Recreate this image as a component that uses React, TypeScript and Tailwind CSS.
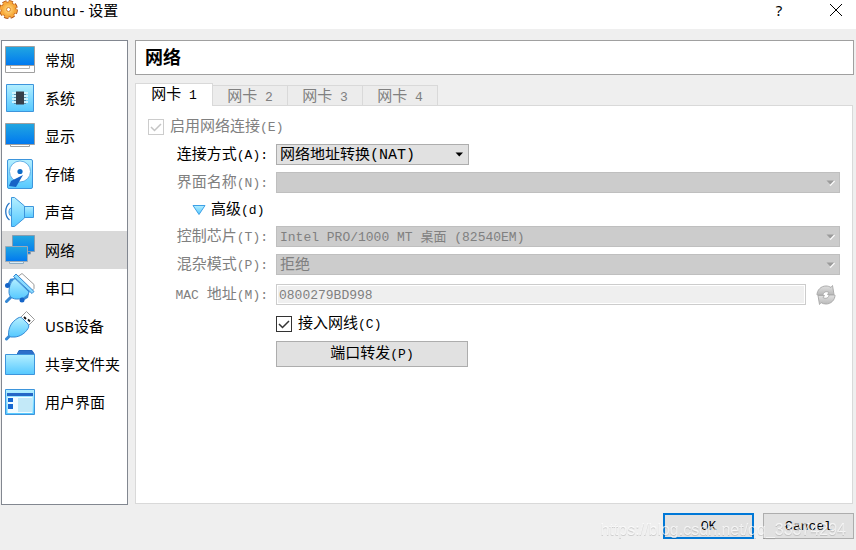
import React, { useState } from 'react';

const sections = ['常规', '系统', '显示', '存储', '声音', '网络', '串口', 'USB设备', '共享文件夹', '用户界面'];
const adapters = ['1', '2', '3', '4'];

const mono = "font-['Liberation_Mono','Noto_Sans_CJK_SC',monospace]";

function Gradients() {
    return (
        <svg className="absolute size-0" aria-hidden="true">
            <defs>
                <linearGradient id="screen" x1="0" y1="0" x2="0" y2="1">
                    <stop offset="0" stopColor="#22a7e0" />
                    <stop offset="1" stopColor="#0078f0" />
                </linearGradient>
                <linearGradient id="sky" x1="0" y1="0" x2="0" y2="1">
                    <stop offset="0" stopColor="#b4efff" />
                    <stop offset="1" stopColor="#55c8ff" />
                </linearGradient>
                <radialGradient id="gear">
                    <stop offset="0" stopColor="#ffe08a" />
                    <stop offset="1" stopColor="#f6a02c" />
                </radialGradient>
                <linearGradient id="silver" x1="0" y1="0" x2="0" y2="1">
                    <stop offset="0" stopColor="#e2e2e2" />
                    <stop offset="1" stopColor="#b8b8b8" />
                </linearGradient>
            </defs>
        </svg>
    );
}

function SectionIcon({ name }: { name: string }) {
    return (
        <svg viewBox="0 0 30 30" className="size-[30px] shrink-0" aria-hidden="true">
            {name === '常规' && (
                <>
                    <path d="M.5 20.5h29v7H.5z" fill="#fff" stroke="#a0a0a0" />
                    <path d="M.5 1.5h29v19H.5z" fill="url(#screen)" stroke="#a0a0a0" />
                    <path d="M5.5 21v2.500h19V21" fill="#fff" stroke="#b4b4b4" />
                </>
            )}
            {name === '系统' && (
                <>
                    <path d="M1.5 1.5h27v27h-27z" fill="url(#sky)" stroke="#3d95dc" />
                    <path d="M7 10h16M7 13h16M7 16h16M7 19h16" stroke="#e8faff" strokeWidth="1.6" />
                    <path d="M9 11.5h12M9 14.5h12M9 17.5h12M9 20.5h12" stroke="#5b8da8" />
                    <path d="M11 8.5h8v13h-8z" fill="#363e4a" />
                </>
            )}
            {name === '显示' && (
                <>
                    <path d="M5.5 23.5v2h19v-2" fill="#fff" stroke="#a0a0a0" />
                    <path d="M.5 2.5h29v21H.5z" fill="url(#screen)" stroke="#a0a0a0" />
                </>
            )}
            {name === '存储' && (
                <>
                    <rect x="2.5" y=".5" width="25" height="29" rx="1.5" fill="url(#sky)" stroke="#3d95dc" />
                    <circle cx="15" cy="12.5" r="10.5" fill="#fff" stroke="#4a9fe0" strokeWidth=".8" />
                    <circle cx="15" cy="12.5" r="2.6" fill="#0d6bc8" />
                    <path d="M18 16l-12 6-2 5 7 1z" fill="#1763c6" />
                </>
            )}
            {name === '声音' && (
                <>
                    <path d="M4.5 6C-.5 10-.5 19 4.5 23" fill="none" stroke="#2675c4" strokeWidth="1.3" />
                    <path d="M19.5 9.5h9v11h-9z" fill="url(#sky)" stroke="#3d95dc" />
                    <path d="M7 10.500C3 11 3 19 7 19.500z" fill="url(#sky)" stroke="#3d95dc" />
                    <path d="M6.500.500h3l10 8.500v12l-10 8.500h-3z" fill="url(#sky)" stroke="#3d95dc" />
                </>
            )}
            {name === '网络' && (
                <>
                    <path d="M7.5.5h22v16h-22zM11.5 17v2h14v-2" fill="url(#screen)" stroke="#879db0" />
                    <path d="M4.5 26v2.500h14V26" fill="#d9ecf8" stroke="#8cabc2" />
                    <path d="M.5 11.500h22v15H.5z" fill="url(#screen)" stroke="#9aaab8" />
                </>
            )}
            {name === '串口' && (
                <>
                    <path d="M13 3.500l4-3L29 11.500v4l-3 3z" fill="#fff" stroke="#999" />
                    <path d="M6 24l-4.500 4.500" stroke="#3588d4" strokeWidth="3" strokeLinecap="round" />
                    <path d="M3 12.500L6 7l6-1M17 27l5-3 1.500-7" fill="none" stroke="#3588d4" strokeWidth="2.500" />
                    <path d="M10 5.500L24 19c-1 4-6 7-11 7-5 .500-9-2-9-7 0-6 2-11 6-13.500z" fill="url(#sky)" stroke="#3588d4" />
                    <path d="M11 1l18 17.500-2 2L8.500 3.500z" fill="#8adcff" stroke="#3588d4" />
                    <circle cx="2.500" cy="12.500" r="2.500" fill="#1565c8" />
                    <circle cx="17" cy="27" r="2.500" fill="#1565c8" />
                </>
            )}
            {name === 'USB设备' && (
                <>
                    <path d="M14 8l7.5-7.5 8 8L22 16z" fill="#fff" stroke="#999" />
                    <path d="M19 6l2 2M23 8.500l2 2" stroke="#111" strokeWidth="1.800" />
                    <path d="M1.500 28l4-4" stroke="#3588d4" strokeWidth="3" strokeLinecap="round" />
                    <path d="M13 7c2-1 3-1 4.500.500l5.500 5.500c1 1.500 1 2.500 0 4.500-3 5-8 8-13 8.500H5.500L3.500 24c0-8 3-13 9.500-17z" fill="url(#sky)" stroke="#3588d4" />
                </>
            )}
            {name === '共享文件夹' && (
                <>
                    <path d="M12 5.500l2-4h13l2.500 4z" fill="#2d6fc9" stroke="#2565bd" />
                    <path d="M.5 5.500h29v20H.5z" fill="url(#sky)" stroke="#3d95dc" />
                </>
            )}
            {name === '用户界面' && (
                <>
                    <path d="M.5 2.500h29v25H.5z" fill="url(#sky)" stroke="#3d95dc" />
                    <path d="M2 6h26v3H2z" fill="#2467c7" />
                    <path d="M2.500 10h25v16h-25z" fill="#f2fcff" />
                    <path d="M3 11h5v4H3zM3 17h5v5H3z" fill="#1668d2" />
                    <path d="M13 11h14v14H13z" fill="#c3e9f8" />
                </>
            )}
        </svg>
    );
}

// Latin shortcuts run smaller than the Chinese text beside them
function Caption({ text, hotkey, colon }: { text: React.ReactNode; hotkey: string; colon?: boolean }) {
    return (
        <>
            {text}
            <span className="text-[13px]">({hotkey}){colon && ':'}</span>
        </>
    );
}

function Row({ id, label, hotkey, disabled, children }: { id: string; label: React.ReactNode; hotkey: string; disabled?: boolean; children: React.ReactNode }) {
    return (
        <div className="flex h-[21px] items-center gap-1.5">
            <label htmlFor={id} className={`w-[122px] shrink-0 pt-0.5 pr-0.5 text-right whitespace-nowrap ${disabled ? 'text-[#808080]' : 'text-black'}`}>
                <Caption text={label} hotkey={hotkey} colon />
            </label>
            {children}
        </div>
    );
}

function Select({ id, options, disabled, className }: { id: string; options: string[]; disabled?: boolean; className: string }) {
    return (
        <div className={`relative ${className}`}>
            <select id={id} disabled={disabled} className="block h-[21px] w-full appearance-none border border-[#adadad] bg-[#e1e1e1] pt-0.5 pr-6 pl-[3px] leading-[17px] text-black disabled:border-[#bfbfbf] disabled:bg-[#cccccc] disabled:text-[#808080] disabled:opacity-100">
                {options.map(o => <option key={o}>{o}</option>)}
            </select>
            <svg viewBox="0 0 9 6" className="pointer-events-none absolute top-2 right-[5px] h-1.5 w-[9px]" aria-hidden="true">
                {disabled && <path d="M4 5.500l4.500-4.500" stroke="#fff" strokeWidth="1.500" />}
                <path d="M.5.500h7.500L4.250 4.500z" fill={disabled ? '#9b9b9b' : '#000'} />
            </svg>
        </div>
    );
}

function CheckBox({ id, checked, disabled, onChange }: { id: string; checked: boolean; disabled?: boolean; onChange?: () => void }) {
    return (
        <span className="relative size-4 shrink-0">
            <input
                id={id}
                type="checkbox"
                checked={checked}
                disabled={disabled}
                onChange={onChange}
                readOnly={!onChange}
                className="block size-4 appearance-none border border-[#333333] bg-white disabled:border-[#cccccc]"
            />
            {checked && (
                <svg viewBox="0 0 16 16" className="pointer-events-none absolute inset-0" aria-hidden="true">
                    <path d="M3 8l3.500 3.500L13 5" fill="none" stroke={disabled ? '#c4c4c4' : '#333'} strokeWidth="1.500" />
                </svg>
            )}
        </span>
    );
}

export default function App() {
    const [section, setSection] = useState('网络');
    const [adapter, setAdapter] = useState('1');
    const [cable, setCable] = useState(true);
    const [advanced, setAdvanced] = useState(true);

    return (
        <div className={`relative flex min-h-screen flex-col bg-[#efefef] text-[15px] leading-5 text-black ${mono}`}>
            <Gradients />
            <header className="flex h-[29px] items-start bg-white font-['Noto_Sans','Noto_Sans_CJK_SC',sans-serif]">
                <svg viewBox="0 0 20 20" className="size-5 shrink-0" aria-hidden="true">
                    <circle cx="8.500" cy="9.500" r="7.500" fill="none" stroke="#b5591c" strokeWidth="4" strokeDasharray="3.900 1.990" />
                    <circle cx="8.500" cy="9.500" r="7.500" fill="url(#gear)" stroke="#c76a1e" />
                    <circle cx="8.500" cy="9.500" r="7.200" fill="none" stroke="#f9a93c" strokeWidth="2.600" strokeDasharray="3.500 2.155" />
                    <circle cx="8.500" cy="9.500" r="2" fill="#fff" stroke="#d9822b" />
                </svg>
                <h1 className="ml-1 grow">ubuntu - 设置</h1>
                <button aria-label="Help" className="mr-[37px] w-5">?</button>
                <button aria-label="Close" className="mr-2.5 flex h-5 w-5 items-center justify-center">
                    <svg viewBox="0 0 12 12" className="size-3" aria-hidden="true">
                        <path d="M0 0l12 12M12 0L0 12" stroke="#000" />
                    </svg>
                </button>
            </header>

            <div className="flex grow gap-[7px] pt-[11px] pr-0.5 pl-px">
                <nav className="w-[127px] shrink-0 border border-[#828790] bg-white font-['Noto_Sans','Noto_Sans_CJK_SC',sans-serif]">
                    {sections.map(name => (
                        <button
                            key={name}
                            onClick={() => setSection(name)}
                            className={`flex h-[38px] w-full items-center gap-2.5 pl-[3px] whitespace-nowrap ${name === section ? 'bg-[#d9d9d9]' : ''}`}
                        >
                            <SectionIcon name={name} />
                            {name}
                        </button>
                    ))}
                </nav>

                <main className="flex min-w-0 grow flex-col">
                    <h2 className="flex h-[35px] items-center border border-[#a0a0a0] bg-white pt-0.5 pl-[9px] text-lg font-bold">{section}</h2>
                    <div role="tablist" className="z-10 mt-2 flex h-[23px] items-end">
                        {adapters.map(n => (
                            <button
                                key={n}
                                role="tab"
                                aria-selected={n === adapter}
                                onClick={() => setAdapter(n)}
                                className={n === adapter
                                    ? 'h-[23px] w-[78px] border border-b-0 border-[#d9d9d9] bg-white pt-0.5'
                                    : 'h-[21px] w-[75px] border border-l-0 border-[#d9d9d9] bg-[#ececec] pt-0.5 text-[#808080]'}
                            >
                                网卡<span className="text-[13px]"> {n}</span>
                            </button>
                        ))}
                    </div>
                    <div className="-mt-px mr-px mb-px flex grow flex-col gap-[7px] border border-[#d9d9d9] bg-white px-3 pt-2.5">
                        <div className="flex h-[21px] items-center gap-1.5 text-[#808080]">
                            <CheckBox id="enable" checked disabled />
                            <label htmlFor="enable" className="pt-0.5"><Caption text="启用网络连接" hotkey="E" /></label>
                        </div>
                        <Row id="attached" label="连接方式" hotkey="A">
                            <Select id="attached" options={['网络地址转换(NAT)', '桥接网卡', '内部网络']} className="w-[193px]" />
                        </Row>
                        <Row id="interface" label="界面名称" hotkey="N" disabled>
                            <Select id="interface" options={['']} disabled className="grow" />
                        </Row>
                        <button onClick={() => setAdvanced(!advanced)} className="ml-11 flex h-[19px] items-center gap-[5px] self-start">
                            <svg viewBox="0 0 14 12" className="h-3 w-3.5" aria-hidden="true">
                                <path d="M1 1.500h12L7 10.500z" fill="url(#sky)" stroke="#3da0e6" />
                            </svg>
                            <span className="pt-0.5"><Caption text="高级" hotkey="d" /></span>
                        </button>
                        {advanced && (
                            <>
                                <Row id="chip" label="控制芯片" hotkey="T" disabled>
                                    <Select id="chip" options={['Intel PRO/1000 MT 桌面 (82540EM)']} disabled className="grow text-[13px]" />
                                </Row>
                                <Row id="promisc" label="混杂模式" hotkey="P" disabled>
                                    <Select id="promisc" options={['拒绝']} disabled className="grow" />
                                </Row>
                                <div className="flex h-[25px] items-center gap-2">
                                    <div className="grow">
                                        <Row id="mac" label={<><span className="text-[13px]">MAC </span>地址</>} hotkey="M" disabled>
                                            <input id="mac" defaultValue="0800279BD998" disabled className="h-[21px] min-w-0 grow border border-[#cccccc] bg-[#efefef] px-0.5 pt-0.5 text-[13px] text-[#808080] ring-1 ring-white ring-inset" />
                                        </Row>
                                    </div>
                                    <button disabled aria-label="Refresh" className="mr-1 ml-0.5">
                                        <svg viewBox="0 0 20 20" className="size-5" aria-hidden="true">
                                            <path d="M1 10C1 5 5 1 10 1c2 0 3.500.500 5 1.500L16.500.500l1.500 9h-6.500l1.500-2c-3-2-6 0-6 2.500z" fill="url(#silver)" stroke="#adadad" />
                                            <path d="M19 10c0 5-4 9-9 9-2 0-3.500-.500-5-1.500L3.500 19.500 2 10.500h6.500l-1.500 2c3 2 6 0 6-2.500z" fill="url(#silver)" stroke="#adadad" />
                                        </svg>
                                    </button>
                                </div>
                                <div className="ml-32 flex h-5 items-center gap-1.5">
                                    <CheckBox id="cable" checked={cable} onChange={() => setCable(!cable)} />
                                    <label htmlFor="cable" className="pt-0.5"><Caption text="接入网线" hotkey="C" /></label>
                                </div>
                                <button className="ml-32 h-[26px] w-48 self-start border border-[#adadad] bg-[#e1e1e1] pt-0.5">
                                    <Caption text="端口转发" hotkey="P" />
                                </button>
                            </>
                        )}
                    </div>
                </main>
            </div>

            <footer className="flex justify-end gap-[9px] pt-2 pr-0.5 pb-[11px] text-[13px]">
                <button className="h-[26px] w-[91px] border-2 border-[#0078d7] bg-[#e1e1e1] pt-0.5">OK</button>
                <button className="h-[26px] w-[91px] border border-[#adadad] bg-[#e1e1e1] pt-0.5">Cancel</button>
            </footer>
            <p className="pointer-events-none absolute right-2.5 bottom-2 font-['Liberation_Sans',sans-serif] text-base text-white/70 drop-shadow-[0_1px_0_rgba(0,0,0,0.2)]">https://blog.csdn.net/qq_33374294</p>
        </div>
    );
}
